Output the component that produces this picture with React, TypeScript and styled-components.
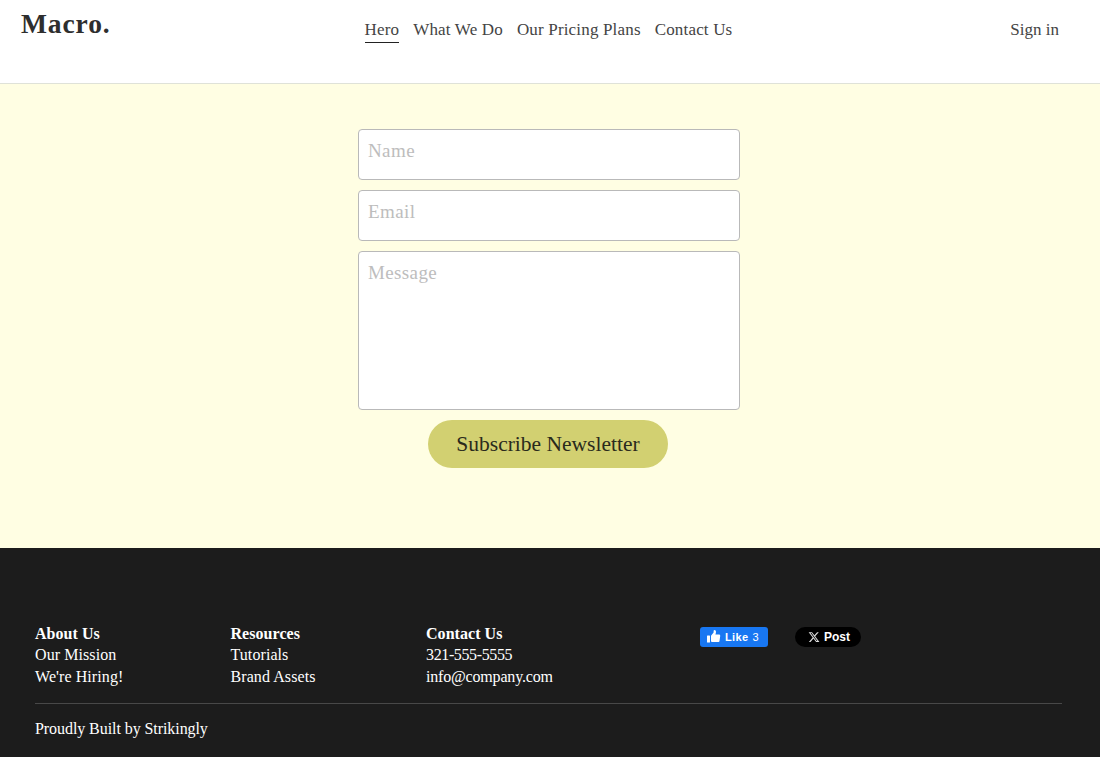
import React from "react";
import styled, { createGlobalStyle } from "styled-components";

const Global = createGlobalStyle`
  html, body { margin: 0; padding: 0; background: #fff; }
  body { font-family: "Liberation Serif", "DejaVu Serif", serif; }
  * { box-sizing: border-box; }
`;
const Page = styled.div`
  width: 1100px;
  height: 757px;
  display: flex;
  flex-direction: column;
  overflow: hidden;
`;
const Header = styled.header`
  height: 84px;
  flex: none;
  background: #fff;
  border-bottom: 1px solid #dfe2d8;
  display: flex;
  align-items: flex-start;
  padding: 0 41px 0 21px;
`;
const Logo = styled.div`
  width: 343.5px;
  font-size: 27.5px;
  font-weight: 700;
  line-height: 32px;
  padding-top: 8px;
  color: #2e2e2e;
  letter-spacing: 0.9px;
`;
const Nav = styled.nav`
  display: flex;
  gap: 14px;
  padding-top: 19px;
  flex: 1;
`;
const NavLink = styled.a<{ $active?: boolean }>`
  display: block;
  height: 24px;
  font-size: 17px;
  line-height: 22px;
  letter-spacing: 0.17px;
  color: #444;
  border-bottom: 1px solid ${(p) => (p.$active ? "#222" : "transparent")};
`;
const SignIn = styled.a`
  font-size: 17px;
  line-height: 22px;
  letter-spacing: 0;
  color: #444;
  padding-top: 19px;
`;
const Main = styled.main`
  height: 464px;
  flex: none;
  background: #fffee3;
  padding: 45px 0 0 358px;
`;
const Form = styled.form`
  width: 382px;
  display: flex;
  flex-direction: column;
  gap: 10px;
`;
const Field = styled.input`
  display: block;
  width: 100%;
  height: 51px;
  padding: 0 9px 7px;
  border: 1px solid #b9b9b9;
  border-radius: 4px;
  background: #fff;
  font: 19px "Liberation Serif", serif;
  letter-spacing: 0.4px;
  outline: none;
  &::placeholder { color: #bdbdbd; opacity: 1; }
`;
const Area = styled.textarea`
  display: block;
  width: 100%;
  height: 159px;
  padding: 10px 9px;
  border: 1px solid #b9b9b9;
  border-radius: 4px;
  background: #fff;
  font: 19px/22px "Liberation Serif", serif;
  letter-spacing: 0.37px;
  resize: none;
  outline: none;
  &::placeholder { color: #bdbdbd; opacity: 1; }
`;
const Submit = styled.button`
  align-self: flex-start;
  margin-left: 70px;
  width: 240px;
  height: 48px;
  border: 0;
  border-radius: 24px;
  background: #d2d071;
  color: #2a2a1c;
  font: 21.5px "Liberation Serif", serif;
  letter-spacing: 0;
  padding: 0;
`;
const Footer = styled.footer`
  flex: 1;
  background: #1c1c1c;
  color: #fff;
  padding: 75px 38px 0 35px;
`;
const Columns = styled.div`
  display: flex;
  height: 81px;
  border-bottom: 1px solid #484848;
`;
const Column = styled.div<{ $w: number }>`
  width: ${(p) => p.$w}px;
  flex: none;
`;
const ColTitle = styled.div`
  font-size: 16px;
  font-weight: 700;
  line-height: 21px;
  letter-spacing: 0.05px;
`;
const ColItem = styled.div<{ $spacing?: number }>`
  font-size: 16px;
  line-height: 22px;
  letter-spacing: ${(p) => p.$spacing ?? 0.08}px;
`;
const Social = styled.div`
  display: flex;
  align-items: flex-start;
  gap: 27px;
  padding-top: 4px;
`;
const LikeButton = styled.div`
  width: 68px;
  height: 20px;
  border-radius: 3px;
  background: #1877f2;
  color: #fff;
  font: 700 11px/20px "Liberation Sans", Arial, sans-serif;
  display: flex;
  align-items: center;
  gap: 4px;
  padding-left: 7px;
  letter-spacing: 0.35px;
  svg { flex: none; margin-top: -1px; }
`;
const LikeCount = styled.span`
  font-weight: 400;
`;
const PostButton = styled.div`
  width: 66px;
  height: 20px;
  border-radius: 10px;
  background: #000;
  color: #fff;
  font: 700 12px/20px "Liberation Sans", Arial, sans-serif;
  display: flex;
  align-items: center;
  gap: 4px;
  padding-left: 13px;
`;
const Credit = styled.div`
  font-size: 16px;
  line-height: 22px;
  letter-spacing: -0.07px;
  padding-top: 14px;
`;

export default function App() {
  return (
    <Page>
      <Global />
      <Header>
        <Logo>Macro.</Logo>
        <Nav>
          <NavLink $active>Hero</NavLink>
          <NavLink>What We Do</NavLink>
          <NavLink>Our Pricing Plans</NavLink>
          <NavLink>Contact Us</NavLink>
        </Nav>
        <SignIn>Sign in</SignIn>
      </Header>
      <Main>
        <Form>
          <Field placeholder="Name" />
          <Field placeholder="Email" />
          <Area placeholder="Message" />
          <Submit type="button">Subscribe Newsletter</Submit>
        </Form>
      </Main>
      <Footer>
        <Columns>
          <Column $w={195.5}>
            <ColTitle>About Us</ColTitle>
            <ColItem>Our Mission</ColItem>
            <ColItem>We're Hiring!</ColItem>
          </Column>
          <Column $w={195.5}>
            <ColTitle>Resources</ColTitle>
            <ColItem>Tutorials</ColItem>
            <ColItem>Brand Assets</ColItem>
          </Column>
          <Column $w={274}>
            <ColTitle>Contact Us</ColTitle>
            <ColItem $spacing={-0.37}>321-555-5555</ColItem>
            <ColItem $spacing={-0.18}>info@company.com</ColItem>
          </Column>
          <Social>
            <LikeButton>
              <svg width="14" height="13" viewBox="0 0 14 13" fill="#fff">
                <rect x="0" y="5.5" width="3" height="7" rx="0.5" />
                <path d="M4 5.8 6.6 2.6V.9c0-.6.4-.9.9-.9.9 0 1.5.9 1.5 2 0 .9-.3 1.8-.6 2.6h3.6c.8 0 1.3.6 1.2 1.3l-.7 5c-.1.6-.6 1.1-1.3 1.1H6c-.8 0-1.3-.3-2-.6Z" />
              </svg>
              <span>Like</span>
              <LikeCount>3</LikeCount>
            </LikeButton>
            <PostButton>
              <svg width="12" height="12" viewBox="0 0 24 24" fill="#ddd">
                <path d="M18.24 2.25h3.31l-7.23 8.26 8.5 11.24H16.17l-5.21-6.82-5.97 6.82H1.68l7.73-8.84L1.25 2.25H8.08l4.71 6.23 5.45-6.23Zm-1.16 17.52h1.83L7.08 4.13H5.12l11.96 15.64Z" />
              </svg>
              <span>Post</span>
            </PostButton>
          </Social>
        </Columns>
        <Credit>Proudly Built by Strikingly</Credit>
      </Footer>
    </Page>
  );
}
